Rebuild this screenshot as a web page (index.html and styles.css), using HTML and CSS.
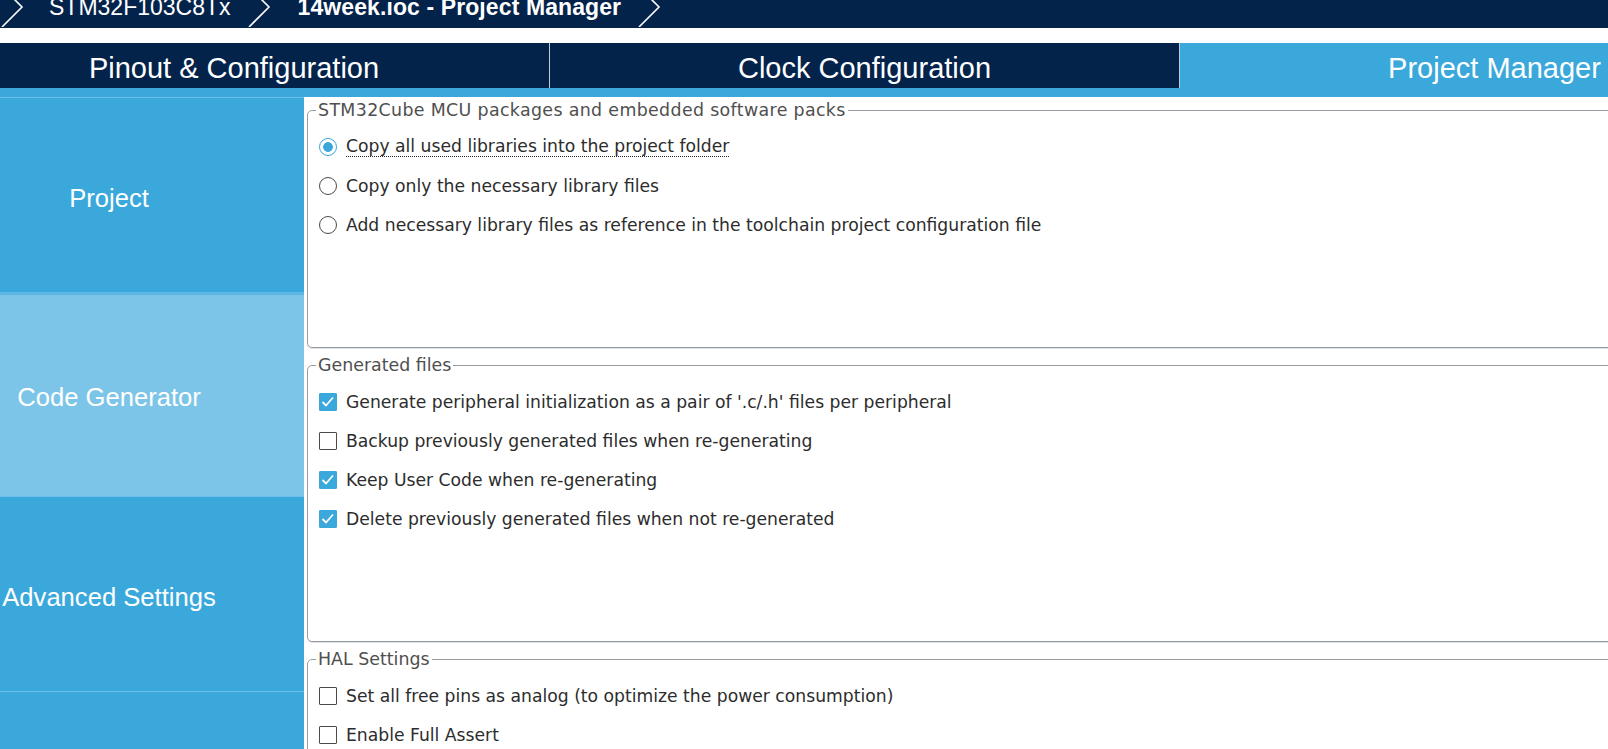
FILE: index.html
```html
<!doctype html>
<html>
<head>
<meta charset="utf-8">
<title>14week.ioc - Project Manager</title>
<link rel="stylesheet" href="styles.css">
</head>
<body>

<div class="topbar">
 <div class="crumbs">
  <svg class="chev first" width="24" height="40" viewBox="0 0 24 40"><polyline points="2,0 22,20 2,40"/></svg>
  <span class="crumb">STM32F103C8Tx</span>
  <svg class="chev" width="24" height="40" viewBox="0 0 24 40"><polyline points="2,0 22,20 2,40"/></svg>
  <span class="crumb current">14week.ioc - Project Manager</span>
  <svg class="chev" width="24" height="40" viewBox="0 0 24 40"><polyline points="2,0 22,20 2,40"/></svg>
 </div>
</div>

<div class="tabs">
 <div class="tab">Pinout &amp; Configuration</div>
 <div class="tab">Clock Configuration</div>
 <div class="tab active">Project Manager</div>
</div>
<div class="strip"></div>

<div class="main">
 <div class="side">
  <div class="side-item">Project</div>
  <div class="side-item active">Code Generator</div>
  <div class="side-item">Advanced Settings</div>
  <div class="side-item"></div>
 </div>

 <div class="content">
  <fieldset class="group">
   <legend class="wide">STM32Cube MCU packages and embedded software packs</legend>
   <div class="opts first">
    <label class="opt"><input type="radio" name="lib" checked><span class="focus">Copy all used libraries into the project folder</span></label>
    <label class="opt"><input type="radio" name="lib"><span>Copy only the necessary library files</span></label>
    <label class="opt"><input type="radio" name="lib"><span>Add necessary library files as reference in the toolchain project configuration file</span></label>
   </div>
  </fieldset>

  <fieldset class="group">
   <legend>Generated files</legend>
   <div class="opts second">
    <label class="opt"><input type="checkbox" checked><span>Generate peripheral initialization as a pair of '.c/.h' files per peripheral</span></label>
    <label class="opt"><input type="checkbox"><span>Backup previously generated files when re-generating</span></label>
    <label class="opt"><input type="checkbox" checked><span>Keep User Code when re-generating</span></label>
    <label class="opt"><input type="checkbox" checked><span>Delete previously generated files when not re-generated</span></label>
   </div>
  </fieldset>

  <fieldset class="group">
   <legend>HAL Settings</legend>
   <div class="opts">
    <label class="opt"><input type="checkbox"><span>Set all free pins as analog (to optimize the power consumption)</span></label>
    <label class="opt"><input type="checkbox"><span>Enable Full Assert</span></label>
   </div>
  </fieldset>
 </div>
</div>

</body>
</html>
```

FILE: styles.css
```css
html, body {
	margin: 0;
	width: 1608px;
	height: 749px;
	overflow: hidden;
	background: #fff;
	font-family: "DejaVu Sans", sans-serif;
}

/* breadcrumb bar, scrolled so its top is cut off */
.topbar {
	height: 28px;
	background: #03234b;
	overflow: hidden;
}
.crumbs {
	display: flex;
	align-items: center;
	height: 40px;
	margin-top: -13px;
	color: #fff;
	font-family: "Liberation Sans", Arial, sans-serif;
	font-size: 23px;
	white-space: nowrap;
}
.chev { flex: none; margin-left: 16px; }
.chev.first { margin-left: 0; }
.chev polyline { fill: none; stroke: #fff; stroke-width: 1.6; }
.crumb { margin-left: 25px; }
.crumb.current { font-weight: bold; margin-left: 27px; letter-spacing: 0.1px; }

/* main tabs */
.tabs {
	display: flex;
	height: 45px;
	margin-top: 15px;
	margin-left: -81px;
	background: #03234b;
}
.tab {
	flex: 0 0 630px;
	display: flex;
	align-items: center;
	justify-content: center;
	padding-top: 5px;
	color: #fff;
	font-family: "Liberation Sans", Arial, sans-serif;
	font-size: 29px;
	box-sizing: border-box;
}
.tab + .tab { border-left: 1px solid #c5cbd3; }
.tab.active { background: #3aa8db; }

.strip { height: 9px; background: #3aa8db; }

.main {
	display: flex;
	height: 652px;
}

/* left menu */
.side {
	flex: 0 0 390px;
	margin-left: -86px;
	background: #3aa8db;
}
.side-item {
	display: flex;
	align-items: center;
	justify-content: center;
	height: 195px;
	padding-top: 6px;
	box-sizing: border-box;
	border-top: 1px solid #6cbfe8;
	background: #3aa8db;
	color: #fff;
	font-family: "Liberation Sans", Arial, sans-serif;
	font-size: 25.6px;
}
.side-item.active {
	height: 204px;
	padding-top: 4px;
	border-top: 3px solid #5cb7e4;
	background: #7dc5e8;
}

/* option groups */
.content {
	flex: 1;
	overflow: hidden;
	padding-left: 3px;
}
.group {
	margin: 8px -40px 0 0;
	padding: 8px 0 0 11px;
	border: 1px solid #979ca2;
	border-radius: 5px;
	box-shadow: 0 1px 0 #dde0e4;
	min-width: 0;
}
.group:first-child { margin-top: 4px; }
.group legend {
	margin-left: -3px;
	padding: 0 2px;
	line-height: 18px;
	font-size: 17.4px;
	color: #4f4f4f;
}
.group legend.wide { letter-spacing: 0.35px; }
.opts.first { height: 220px; }
.opts.second { height: 259px; }

.opt {
	display: flex;
	align-items: center;
	gap: 9px;
	height: 39px;
	font-size: 17.2px;
	color: #2c2c2c;
	white-space: nowrap;
}
.focus { border-bottom: 1px dotted #222; }

.opt input {
	-webkit-appearance: none;
	appearance: none;
	flex: none;
	width: 18px;
	height: 18px;
	margin: 0;
	box-sizing: border-box;
	border: 1.5px solid #4a4a4a;
	background: #fff;
}
.opt input[type=radio] { border-radius: 50%; }
.opt input[type=radio]:checked {
	border-color: #3aa8db;
	background: radial-gradient(circle, #3aa8db 0 4.5px, #fff 5.2px);
}
.opt input[type=checkbox] { border-radius: 1px; }
.opt input[type=checkbox]:checked {
	border-color: #3aa8db;
	background: #3aa8db url("data:image/svg+xml,%3Csvg xmlns='http://www.w3.org/2000/svg' width='18' height='18'%3E%3Cpolyline points='3.5,9 7,12.5 14,4.5' fill='none' stroke='white' stroke-width='1.8'/%3E%3C/svg%3E") center / 18px 18px no-repeat;
}
```
